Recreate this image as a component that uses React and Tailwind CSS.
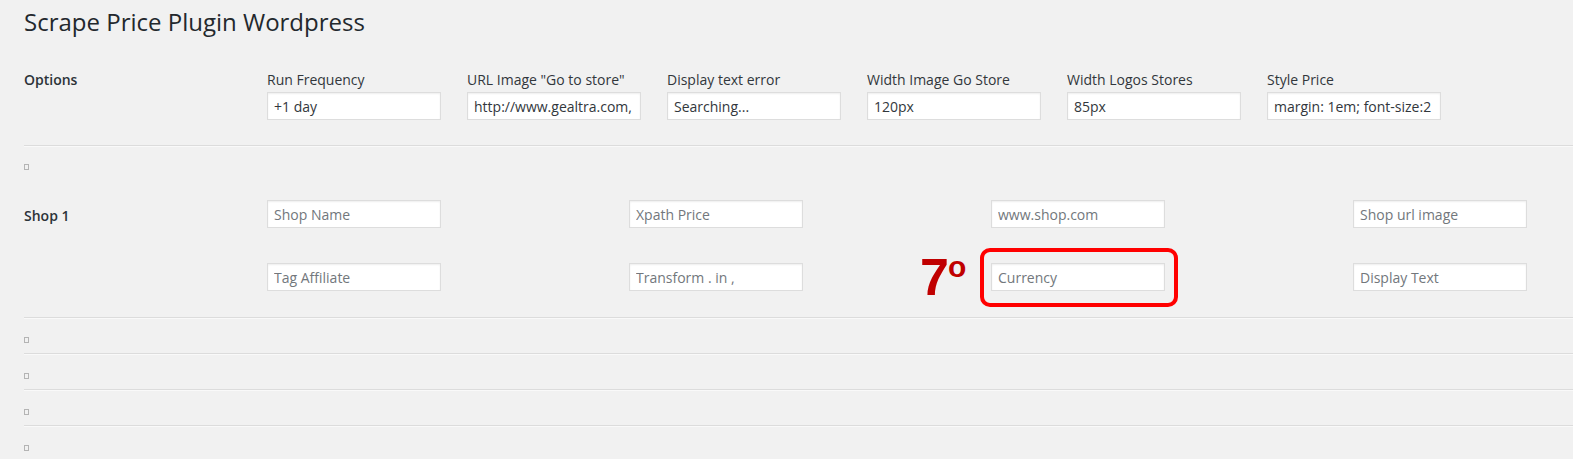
import React from "react";

const font = { fontFamily: '"Open Sans", "Noto Sans", sans-serif' };

const options = [
  { label: "Run Frequency", value: "+1 day" },
  { label: 'URL Image "Go to store"', value: "http://www.gealtra.com,     go-store.png" },
  { label: "Display text error", value: "Searching..." },
  { label: "Width Image Go Store", value: "120px" },
  { label: "Width Logos Stores", value: "85px" },
  { label: "Style Price", value: "margin: 1em; font-size:2" },
];

const shopFields = [
  "Shop Name",
  "Xpath Price",
  "www.shop.com",
  "Shop url image",
  "Tag Affiliate",
  "Transform . in ,",
  "Currency",
  "Display Text",
];

const inputCls =
  "w-[174px] h-[28px] px-[6px] bg-white border border-[#dddddd] text-[14px] text-[#32373c] placeholder:text-[#72777c] shadow-[inset_0_1px_2px_rgba(0,0,0,0.07)] outline-none";

const Hr = () => (
  <div className="border-t border-b border-t-[#dcdcdc] border-b-[#f9f9f9]" />
);

const Tofu = () => (
  <span className="block w-[5px] h-[6px] border border-[#b4b4b4]" />
);

const EmptyRow = () => (
  <>
    <Hr />
    <div className="h-[34px] pt-[18px]">
      <Tofu />
    </div>
  </>
);

export default function App() {
  return (
    <div className="min-h-screen w-full overflow-hidden bg-[#f1f1f1] pl-[24px]" style={font}>
      <h1 className="pt-[7px] text-[24px] leading-[29px] font-normal text-[#23282d]">
        Scrape Price Plugin Wordpress
      </h1>

      {/* options */}
      <div className="mt-[34px] flex pb-[25px]">
        <div className="w-[243px] text-[14px] leading-[20px] font-semibold text-[#2c3338]">
          Options
        </div>
        {options.map((o) => (
          <div key={o.label} className="w-[200px] flex flex-col">
            <label className="text-[14px] leading-[20px] text-[#32373c]">{o.label}</label>
            <input readOnly defaultValue={o.value} className={`mt-[2px] ${inputCls}`} />
          </div>
        ))}
      </div>

      <Hr />
      <div className="h-[53px] pt-[17px]">
        <Tofu />
      </div>

      {/* shop 1 */}
      <div className="flex pb-[26px]">
        <div className="w-[243px] pt-[6px] text-[14px] leading-[20px] font-semibold text-[#2c3338]">
          Shop 1
        </div>
        <div className="grid grid-cols-[362px_362px_362px_175px] gap-y-[35px]">
          {shopFields.map((f) => (
            <div key={f} className="relative">
              <input placeholder={f} className={inputCls} />
              {f === "Currency" && (
                <>
                  <div className="absolute left-[-11px] top-[-15px] w-[198px] h-[59px] rounded-[10px] border-[4px] border-[#ff0000] pointer-events-none" />
                  <div
                    className="absolute left-[-71px] top-[-12px] flex items-start font-bold text-[#c00000]"
                    style={{ fontFamily: '"Liberation Sans", Arial, sans-serif' }}
                  >
                    <span className="text-[52px] leading-[52px]">7</span>
                    <span className="text-[30px] leading-none mt-[1px] -ml-[1px]">o</span>
                  </div>
                </>
              )}
            </div>
          ))}
        </div>
      </div>

      <EmptyRow />
      <EmptyRow />
      <EmptyRow />
      <EmptyRow />
    </div>
  );
}
